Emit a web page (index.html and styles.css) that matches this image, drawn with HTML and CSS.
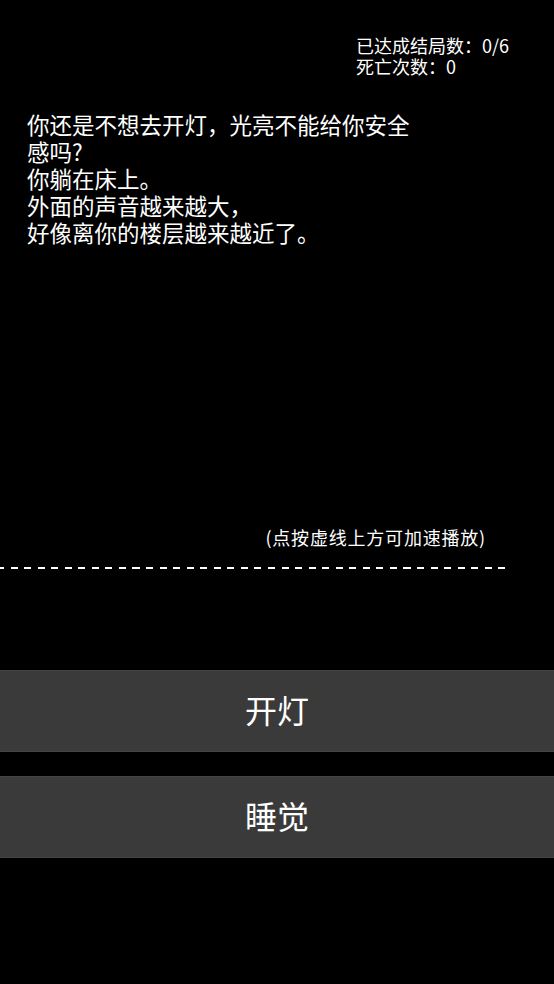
FILE: index.html
```html
<!DOCTYPE html>
<html lang="zh-CN">
<head>
<meta charset="utf-8">
<link rel="stylesheet" href="styles.css">
</head>
<body>
<div class="screen">
  <div class="stats">
    <div class="stats-box">
      <div>已达成结局数：0/6</div>
      <div>死亡次数：0</div>
    </div>
  </div>
  <div class="story">
    <p>你还是不想去开灯，光亮不能给你安全感吗?</p>
    <p>你躺在床上。</p>
    <p>外面的声音越来越大，</p>
    <p>好像离你的楼层越来越近了。</p>
  </div>
  <div class="hint">(点按虚线上方可加速播放)</div>
  <div class="dash"></div>
  <div class="choices">
    <button class="choice">开灯</button>
    <button class="choice">睡觉</button>
  </div>
</div>
</body>
</html>
```
FILE: styles.css
```css
html, body {
  margin: 0;
  padding: 0;
  background: #000;
}
body {
  font-family: "Noto Sans CJK SC", "Noto Sans", sans-serif;
  color: #fff;
}
.screen {
  width: 554px;
  height: 984px;
  overflow: hidden;
}
.stats {
  display: flex;
  justify-content: flex-end;
  padding: 35px 45px 0 0;
}
.stats-box {
  width: 153px;
  font-size: 18px;
  line-height: 21px;
  white-space: nowrap;
}
.story {
  margin-top: 34px;
  padding-left: 27px;
  width: 396px;
  height: 414px;
  font-size: 22.5px;
  line-height: 27px;
}
.story p {
  margin: 0;
}
.hint {
  display: flex;
  justify-content: flex-end;
  padding-right: 68px;
  font-size: 18px;
  line-height: 24px;
  letter-spacing: 0.8px;
}
.dash {
  margin-top: 18px;
  width: 508px;
  margin-left: -3px;
  height: 2px;
  background: repeating-linear-gradient(to right, #fff 0, #fff 7px, transparent 7px, transparent 13.55px);
}
.choices {
  margin-top: 101px;
  display: flex;
  flex-direction: column;
  gap: 24px;
}
.choice {
  display: block;
  width: 100%;
  height: 82px;
  margin: 0;
  padding: 0 0 4px 0;
  border: none;
  border-top: 1px solid #454545;
  border-bottom: 1px solid #454545;
  background: #3a3a3a;
  color: #fff;
  font-family: "Noto Sans CJK SC", "Noto Sans", sans-serif;
  font-size: 32px;
  line-height: 76px;
}
```
